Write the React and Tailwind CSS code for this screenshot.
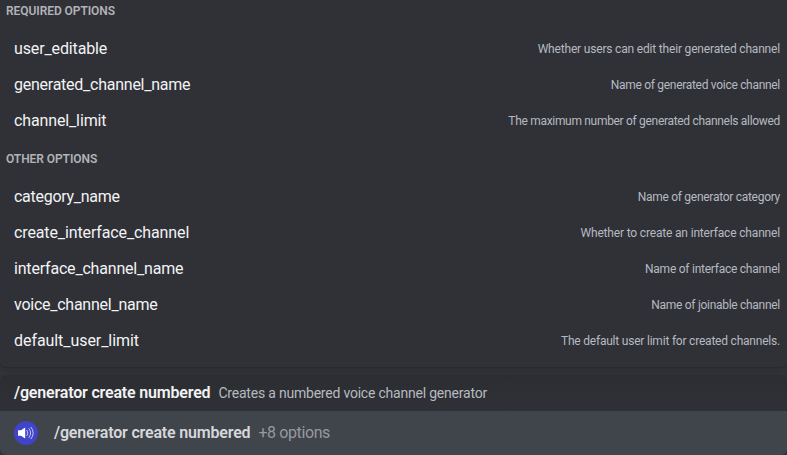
const required = [
  ["user_editable", "tracking-[-0.13px]", "Whether users can edit their generated channel", "tracking-[-0.18px]"],
  ["generated_channel_name", "tracking-[-0.25px]", "Name of generated voice channel", "tracking-[-0.3px]"],
  ["channel_limit", "tracking-[-0.13px]", "The maximum number of generated channels allowed", "tracking-[-0.31px]"],
];
const other = [
  ["category_name", "tracking-[-0.28px]", "Name of generator category", "tracking-[-0.28px]"],
  ["create_interface_channel", "tracking-[-0.12px]", "Whether to create an interface channel", "tracking-[-0.17px]"],
  ["interface_channel_name", "tracking-[-0.19px]", "Name of interface channel", "tracking-[-0.25px]"],
  ["voice_channel_name", "tracking-[-0.25px]", "Name of joinable channel", "tracking-[-0.29px]"],
  ["default_user_limit", "tracking-[-0.06px]", "The default user limit for created channels.", "tracking-[-0.21px]"],
];

function Heading({ children }) {
  return (
    <h3 className="h-4 px-1.5 text-[12px] leading-4 font-semibold tracking-[-0.07px] text-[#b0b3b7] uppercase">
      {children}
    </h3>
  );
}

function Options({ rows }) {
  return (
    <ul>
      {rows.map(([name, nameTracking, description, descriptionTracking]) => (
        <li key={name} className="flex h-9 items-center justify-between pr-[7px] pl-3.5 whitespace-nowrap">
          <span className={`text-[16px] leading-5 text-[#f2f3f5] ${nameTracking}`}>{name}</span>
          <span className={`text-[12px] leading-4 text-[#b5bac1] ${descriptionTracking}`}>{description}</span>
        </li>
      ))}
    </ul>
  );
}

function SpeakerAvatar() {
  return (
    <svg className="size-6 shrink-0" viewBox="0 0 24 24" fill="none">
      <circle cx="12" cy="12" r="12" fill="#4044c8" />
      <path d="M4 9.3h3L11.2 6.5v11L7 14.8H4z" fill="#fff" />
      <path d="M13 9.3q2 2.7 0 5.4M15 7.6q3.4 4.4 0 8.8M17 6.2q4.6 5.8 0 11.6" stroke="#d0d2fa" strokeWidth="0.9" strokeLinecap="round" />
    </svg>
  );
}

export default function App() {
  return (
    <div className="flex h-[455px] w-[787px] flex-col overflow-hidden bg-[#313338] font-[Roboto,sans-serif]">
      <section className="h-[368px] shrink-0 rounded-b-md border-b border-[#292a2e] bg-[#303136] pt-[3px] shadow-[0_2px_8px_rgba(0,0,0,0.12)]">
        <Heading>Required options</Heading>
        <div className="pt-3 pb-3"><Options rows={required} /></div>
        <Heading>Other options</Heading>
        <div className="pt-3"><Options rows={other} /></div>
      </section>
      <section className="mt-[7px] flex h-9 shrink-0 items-center gap-2 rounded-t-md bg-linear-to-b from-[#2c2d31] to-[#303136] px-3.5 whitespace-nowrap">
        <strong className="text-[16px] leading-5 font-semibold tracking-[-0.18px] text-[#f2f3f5]">/generator create numbered</strong>
        <span className="text-[14px] leading-5 tracking-[-0.21px] text-[#b5bac1]">Creates a numbered voice channel generator</span>
      </section>
      <section className="flex h-11 shrink-0 items-center rounded-b-md bg-[#40444b] px-3.5 whitespace-nowrap">
        <SpeakerAvatar />
        <strong className="ml-4 text-[16px] leading-5 font-semibold tracking-[-0.18px] text-[#d6d8db]">/generator create numbered</strong>
        <span className="ml-2 text-[16px] leading-5 tracking-[-0.4px] text-[#96999e]">+8 options</span>
      </section>
    </div>
  );
}
